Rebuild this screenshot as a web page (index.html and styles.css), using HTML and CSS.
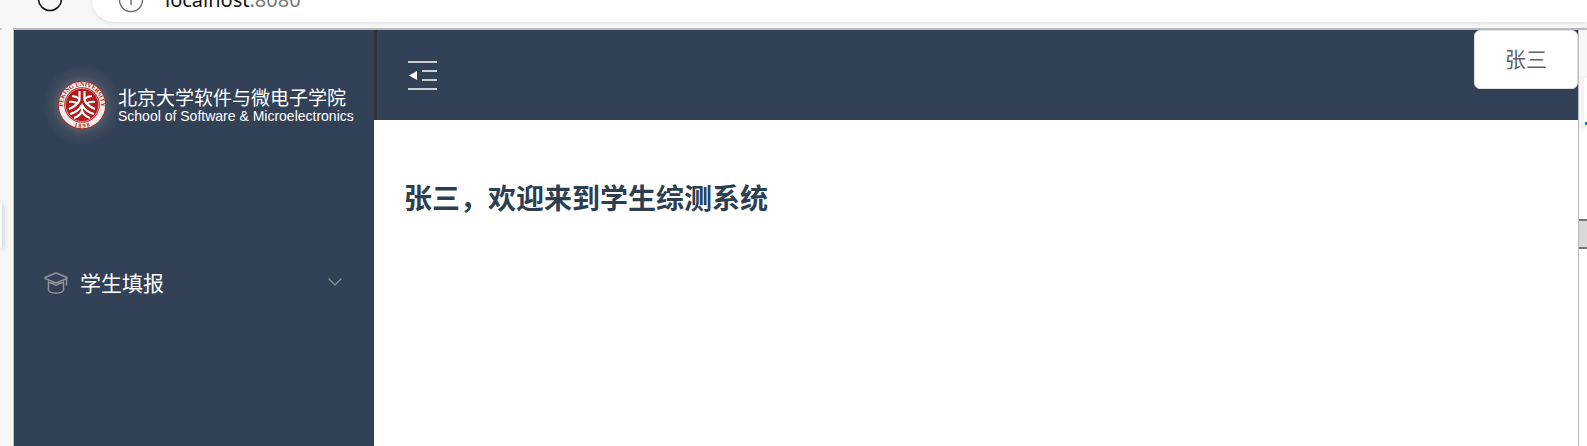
FILE: index.html
```html
<!DOCTYPE html>
<html lang="zh-CN">
<head>
<meta charset="utf-8">
<title>学生综测系统</title>
<link rel="stylesheet" href="styles.css">
</head>
<body>
<div class="browser">
  <button class="reload" type="button" aria-label="刷新"><svg width="26" height="26" viewBox="0 0 26 26"><circle cx="13" cy="13" r="11.5" fill="none" stroke="#111" stroke-width="1.6"/></svg></button>
  <div class="address">
    <svg width="26" height="26" viewBox="0 0 26 26"><circle cx="13" cy="13" r="11.5" fill="none" stroke="#6b6b6b" stroke-width="1.4"/><path d="M13 11v7" stroke="#6b6b6b" stroke-width="1.4"/></svg>
    <span class="url">localhost<span class="port">:8080</span></span>
  </div>
</div>
<div class="window">
  <div class="gutter"><div class="handle"></div></div>
  <div class="app">
    <aside class="sidebar">
      <div class="brand">
        <svg class="seal" width="80" height="80" viewBox="-40 -40 80 80">
          <defs>
            <radialGradient id="glow"><stop offset=".5" stop-color="#8a8580" stop-opacity=".5"/><stop offset=".75" stop-color="#8a8580" stop-opacity=".15"/><stop offset="1" stop-color="#8a8580" stop-opacity="0"/></radialGradient>
            <path id="ring" d="M-14.500 12.500A19.100 19.100 0 1 1 14.500 12.500"/>
            <path id="year" d="M-14 17.800A22.600 22.600 0 0 0 14 17.800"/>
          </defs>
          <circle r="40" fill="url(#glow)"/>
          <circle r="24" fill="#b02222"/>
          <circle r="23.200" fill="#f3eeec"/>
          <circle r="17.800" fill="#b01c1c"/>
          <circle r="16.600" fill="none" stroke="#e9c9c6" stroke-width=".7"/>
          <text class="seal-text"><textPath href="#ring" startOffset="50%" text-anchor="middle">PEKING UNIVERSITY</textPath></text>
          <text class="seal-text"><textPath href="#year" startOffset="50%" text-anchor="middle">1 8 9 8</textPath></text>
          <g fill="none" stroke="#fff" stroke-width="2.1">
            <path d="M-2.500-14V-5Q-5 1-13 4M2.500-14V-5Q5 1 13 4"/>
            <path d="M-10-9Q-6-9-2.500-6M10-9Q6-9 2.500-6"/>
            <path d="M-13-3Q-8-4-4-1M13-3Q8-4 4-1"/>
            <path d="M-12 9Q-4 7 0 0Q4 7 12 9"/>
            <path d="M-8 13Q-2 11 0 6Q2 11 8 13M0 0V7"/>
          </g>
        </svg>
        <div class="names">
          <div class="name-zh">北京大学软件与微电子学院</div>
          <div class="name-en">School of Software &amp; Microelectronics</div>
        </div>
      </div>
      <nav class="menu">
        <button class="menu-item" type="button">
          <svg width="24" height="22" viewBox="0 0 24 22" fill="none" stroke="#909399" stroke-width="1.5" stroke-linejoin="round" stroke-linecap="round"><path d="M12 1L23 5.500V6.500L12 11L1 6.500V5.500ZM4.500 10V18Q5 21 12 21Q19 21 19.500 18V10M4.500 10.500Q9 11 12 13.500Q15 11 19.500 10.500M22.500 7V13"/></svg>
          <span class="menu-label">学生填报</span>
          <svg class="chevron" width="14" height="8" viewBox="0 0 14 8" fill="none" stroke="#909399" stroke-width="1.2"><path d="M.5.500L7 7L13.500.500"/></svg>
        </button>
      </nav>
    </aside>
    <div class="content">
      <header class="topbar">
        <button class="fold" type="button" aria-label="收起菜单"><svg width="30" height="32" viewBox="0 0 30 32"><path d="M0 2H29M14 11H29M14 20H29M0 29H29" stroke="#c9ced6" stroke-width="2.200"/><path d="M1 15.500L9 11V20Z" fill="#fff"/></svg></button>
        <button class="user" type="button">张三</button>
      </header>
      <main><h1>张三，欢迎来到学生综测系统</h1></main>
    </div>
  </div>
  <div class="edge"><div class="edge-top"></div><div class="edge-tab"></div><div class="edge-thumb"></div></div>
</div>
</body>
</html>
```
FILE: styles.css
```css
* { box-sizing: border-box; }
body {
  margin: 0;
  height: 100vh;
  display: flex;
  flex-direction: column;
  overflow: hidden;
  background: #f7f7f7;
  font-family: "Noto Sans", "Noto Sans CJK SC", sans-serif;
}
button { border: 0; padding: 0; background: none; font: inherit; }
svg { display: block; flex: none; }
.browser { flex: none; display: flex; height: 28px; overflow: hidden; padding-left: 37px; }
.reload { height: 26px; margin: -14px 29px 0 0; }
.address {
  flex: 1;
  display: flex;
  align-items: center;
  gap: 21px;
  height: 44px;
  margin-top: -22px;
  padding-left: 26px;
  background: #fff;
  border-radius: 22px 0 0 22px;
  box-shadow: 0 1px 4px #ddd;
}
.url { font-size: 20px; line-height: 28px; color: #111; }
.port { color: #767676; }
.window { flex: 1; display: flex; min-height: 0; }
.gutter { width: 13px; }
.gutter::before { content: ""; display: block; width: 2px; height: 2px; margin-bottom: 172px; background: #ccc; }
.handle { width: 2px; height: 46px; background: #fff; border-radius: 0 4px 4px 0; box-shadow: 1px 2px 5px #aaa; }
.app { position: relative; flex: 1; display: flex; min-width: 0; border: solid #bbb; border-width: 2px 1px 0; background: #fff; }
.sidebar { flex: none; width: 360px; background: #334157; color: #fff; }
.brand { display: flex; align-items: center; height: 120px; padding: 30px 0 0 28px; }
.seal { margin-right: -4px; }
.seal-text { font: bold 6px "Liberation Serif", serif; fill: #a02020; }
.names { padding-top: 2px; }
.name-zh { font-size: 19px; line-height: 20px; white-space: nowrap; }
.name-en { font: 14px/16px "Liberation Sans", sans-serif; white-space: nowrap; }
.menu { padding-top: 98px; }
.menu-item { display: flex; align-items: center; width: 100%; height: 70px; padding: 0 32px 0 30px; color: #fff; text-align: left; }
.menu-label { flex: 1; margin-left: 12px; font-size: 21px; line-height: 30px; }
.chevron { margin-bottom: 3px; }
.content { flex: 1; min-width: 0; }
.topbar { display: flex; justify-content: space-between; align-items: flex-start; height: 90px; background: #334157; border-left: 3px solid #333; }
.fold { margin: 30px 0 0 31px; }
.user { width: 104px; height: 59px; padding-bottom: 4px; font-size: 21px; color: #606266; background: #fff; border: 1px solid #dcdfe6; border-radius: 6px; }
main { padding: 58px 30px; }
h1 { margin: 0; font-size: 28px; line-height: 40px; color: #2c3e50; }
.edge { width: 8px; background: #fff; }
.edge-top { height: 50px; background: #f7f7f7; border-top: 2px solid #bbb; box-shadow: 0 1px 4px #ccc; }
.edge-tab { height: 48px; padding: 44px 0 0 6px; background: linear-gradient(90deg, #f4f4f4 5px, #fff 5px); box-shadow: 0 1px 4px #ddd; }
.edge-tab::before { content: ""; display: block; height: 3px; background: #0078d4; }
.edge-thumb { height: 30px; margin-top: 93px; background: #d9d9d9; border: solid #777; border-width: 2px 0; }
```
